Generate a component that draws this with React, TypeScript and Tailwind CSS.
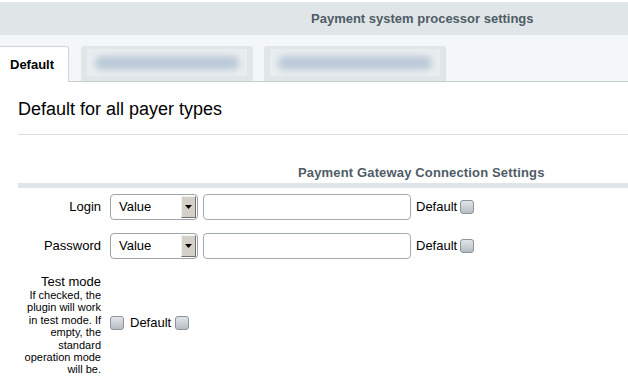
import React from 'react';

function Checkbox() {
  return (
    <span className="inline-block w-[14px] h-[14px] rounded-[3px] border border-[#8c9399] bg-gradient-to-b from-[#e2e5e8] to-[#b7bdc3]" />
  );
}

function ValueSelect() {
  return (
    <div className="ml-[9px] w-[88px] h-[26px] rounded-[4px] border border-[#9da3a8] bg-white flex items-center justify-between pl-[8px] pr-[1px]">
      <span className="text-[13px] text-black">Value</span>
      <span className="w-[15px] h-[22px] bg-[#d4d0c8] border-t border-l border-t-[#f4f2ee] border-l-[#f4f2ee] border-r border-b border-r-[#707070] border-b-[#707070] flex items-center justify-center">
        <svg width="7" height="4" viewBox="0 0 7 4">
          <polygon points="0,0 7,0 3.5,4" fill="#000" />
        </svg>
      </span>
    </div>
  );
}

function FieldRow({ label }: { label: string }) {
  return (
    <div className="flex items-center h-[26px]">
      <div className="w-[83px] text-right text-[13px] text-black">{label}</div>
      <ValueSelect />
      <input className="ml-[5px] w-[208px] h-[26px] rounded-[4px] border border-[#a3aab0] bg-white outline-none" />
      <span className="ml-[5px] text-[13px] text-black">Default</span>
      <span className="ml-[3px] flex">
        <Checkbox />
      </span>
    </div>
  );
}

function BlurTab({ width, gap }: { width: string; gap: string }) {
  return (
    <div className={`${width} ${gap} h-[35px] bg-[#e1e7e9] rounded-t-[3px] px-[6px] pt-[3px]`}>
      <div className="h-[27px] bg-[#e8edef] flex items-center px-[8px]">
        <div className="w-full h-[14px] rounded-full bg-[#bccad8] blur-[3px]" />
      </div>
    </div>
  );
}

export default function App() {
  return (
    <div className="w-[628px] h-[387px] overflow-hidden bg-white font-['Liberation_Sans',Arial,sans-serif]">
      {/* top title bar */}
      <div className="mt-[2px] h-[33px] bg-[#e0e6e8] pl-[311px] flex items-center text-[13px] font-bold text-[#4e5c66]">
        Payment system processor settings
      </div>

      {/* tabs */}
      <div className="h-[47px] bg-[#f4f7f8] border-b border-[#c6ced2] flex items-end">
        <div className="w-[69px] h-[36px] -mb-px bg-white border-t border-r border-[#cfd6d9] rounded-tr-[3px] pl-[10px] flex items-center text-[13px] font-bold text-black">
          Default
        </div>
        <BlurTab width="w-[172px]" gap="ml-[12px]" />
        <BlurTab width="w-[182px]" gap="ml-[11px]" />
      </div>

      <div className="pl-[18px]">
        <h2 className="pt-[17px] pb-[14px] text-[18px] leading-[21px] text-black border-b border-[#dcdcdc]">
          Default for all payer types
        </h2>

        <div className="mt-[30px] pl-[280px] text-[13px] leading-[15px] font-bold text-[#4e5c66] tracking-[0.15px]">
          Payment Gateway Connection Settings
        </div>
        <div className="mt-[3px] h-[5px] bg-[#e0e6e8]" />

        <div className="mt-[6px] flex flex-col gap-[13px]">
          <FieldRow label="Login" />
          <FieldRow label="Password" />
          <div className="mt-[2px] flex items-center">
            <div className="w-[83px] text-right text-black">
              <div className="text-[13px] leading-[15px]">Test mode</div>
              <div className="text-[11px] leading-[12.4px]">
                If checked, the plugin will work in test mode. If empty, the standard operation mode will be.
              </div>
            </div>
            <div className="mb-[4px] flex items-center">
              <span className="ml-[9px] flex">
                <Checkbox />
              </span>
              <span className="ml-[6px] text-[13px] text-black">Default</span>
              <span className="ml-[4px] flex">
                <Checkbox />
              </span>
            </div>
          </div>
        </div>
      </div>
    </div>
  );
}
